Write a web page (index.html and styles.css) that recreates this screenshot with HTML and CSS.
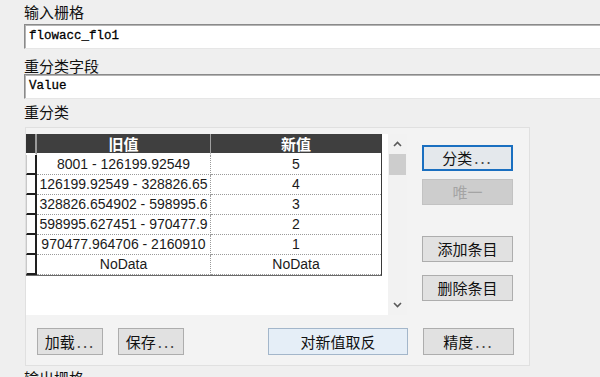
FILE: index.html
```html
<!doctype html>
<html lang="zh-CN">
<head>
  <meta charset="UTF-8">
  <title>重分类</title>
  <link rel="stylesheet" href="styles.css">
</head>
<body>

<div class="label label-first">输入栅格</div>
<div class="field">flowacc_flo1</div>

<div class="label label-mid">重分类字段</div>
<div class="field">Value</div>

<div class="label label-group">重分类</div>

<div class="panel">
  <div class="top-row">
    <div class="listview">
      <div class="grid">
        <div class="hc hc-corner"></div>
        <div class="hc">旧值</div>
        <div class="hc hc-last">新值</div>

        <div class="rh"></div>
        <div class="c">8001 - 126199.92549</div>
        <div class="c c-last">5</div>

        <div class="rh"></div>
        <div class="c">126199.92549 - 328826.65</div>
        <div class="c c-last">4</div>

        <div class="rh"></div>
        <div class="c">328826.654902 - 598995.6</div>
        <div class="c c-last">3</div>

        <div class="rh"></div>
        <div class="c">598995.627451 - 970477.9</div>
        <div class="c c-last">2</div>

        <div class="rh"></div>
        <div class="c">970477.964706 - 2160910</div>
        <div class="c c-last">1</div>

        <div class="rh"></div>
        <div class="c">NoData</div>
        <div class="c c-last">NoData</div>
      </div>
      <div class="scrollbar">
        <div class="arrow">
          <svg width="9" height="6" viewBox="0 0 9 6"><polyline points="1,5 4.5,1.5 8,5" fill="none" stroke="#5a5a5a" stroke-width="1.6"/></svg>
        </div>
        <div class="thumb"></div>
        <div class="track"></div>
        <div class="arrow">
          <svg width="9" height="6" viewBox="0 0 9 6"><polyline points="1,1 4.5,4.5 8,1" fill="none" stroke="#5a5a5a" stroke-width="1.6"/></svg>
        </div>
      </div>
    </div>

    <div class="side">
      <button class="btn btn-focus">分类<span class="dots">...</span></button>
      <button class="btn btn-disabled">唯一</button>
      <button class="btn btn-add">添加条目</button>
      <button class="btn btn-del">删除条目</button>
    </div>
  </div>

  <div class="bottom-row">
    <button class="btn btn-small btn-load">加载<span class="dots">...</span></button>
    <button class="btn btn-small">保存<span class="dots">...</span></button>
    <button class="btn btn-wide">对新值取反</button>
    <button class="btn btn-side">精度<span class="dots">...</span></button>
  </div>
</div>

<div class="label label-last">输出栅格</div>

</body>
</html>
```

FILE: styles.css
```css
html, body {
  margin: 0;
  height: 100%;
  overflow: hidden;
}

body {
  background-color: #efefef;
  font-family: "Noto Sans CJK SC", "Liberation Sans", sans-serif;
  font-size: 15px;
  color: #111;
  padding-left: 24px;
}

.label {
  height: 16px;
  line-height: 16px;
}

.label-first {
  padding-top: 4px;
  padding-bottom: 4px;
}

.label-mid {
  padding-top: 9px;
}

.label-group {
  padding-top: 5px;
  padding-bottom: 7px;
}

.label-last {
  padding-top: 4px;
}

.field {
  box-sizing: border-box;
  width: 600px;
  height: 25px;
  background-color: #fff;
  border-top: 1px solid #8a8a8a;
  border-left: 1px solid #8a8a8a;
  border-bottom: 1px solid #e6e6e6;
  box-shadow: inset 1px 1px 0 #b4b4b4;
  padding-left: 4px;
  font-family: "Liberation Mono", monospace;
  font-size: 12.5px;
  line-height: 23px;
  color: #000;
  -webkit-text-stroke: 0.3px #000;
}

.panel {
  box-sizing: border-box;
  width: 505px;
  height: 239px;
  margin-left: 1px;
  background-color: #f3f3f3;
  border: 1px solid #e0e0e0;
  padding: 6px 15px 0 0;
}

.top-row {
  display: flex;
}

.listview {
  display: flex;
  width: 381px;
  height: 181px;
  background-color: #fff;
}

.grid {
  display: grid;
  grid-template-columns: 11px 174px 170px;
  align-self: flex-start;
  border-right: 1px solid #3a3a3a;
  border-bottom: 1px solid #6a6a6a;
  font-family: "Liberation Sans", sans-serif;
  font-size: 14px;
  color: #1a1a1a;
}

.hc {
  box-sizing: border-box;
  height: 21px;
  line-height: 19px;
  background-color: #3f3f3f;
  border-bottom: 2px solid #fff;
  border-right: 1px solid #a0a0a0;
  color: #fff;
  font-family: "Noto Sans CJK SC", sans-serif;
  font-weight: bold;
  font-size: 15px;
  text-align: center;
}

.hc-corner {
  background-color: #333;
  border-right: 2px solid #9a9a9a;
}

.hc-last {
  border-right: none;
}

.rh {
  box-sizing: border-box;
  height: 20px;
  background-color: #fbfbfb;
  border-left: 1px solid #c8c8c8;
  border-right: 2px solid #1e1e1e;
  border-bottom: 2px solid #1e1e1e;
}

.c {
  box-sizing: border-box;
  height: 20px;
  line-height: 19px;
  text-align: center;
  white-space: nowrap;
  overflow: hidden;
  border-bottom: 1px dotted #9a9a9a;
  border-right: 1px dotted #9a9a9a;
}

.c-last {
  border-right: none;
}

.scrollbar {
  display: flex;
  flex-direction: column;
  width: 19px;
  margin-left: auto;
  background-color: #f2f2f2;
}

.arrow {
  height: 20px;
  display: flex;
  align-items: center;
  justify-content: center;
}

.thumb {
  height: 21px;
  margin: 0 1px 0 1px;
  background-color: #cdcdcd;
}

.track {
  flex: 1;
}

.side {
  display: flex;
  flex-direction: column;
  margin-left: 15px;
}

.btn {
  box-sizing: border-box;
  width: 91px;
  height: 26px;
  padding: 0;
  background-color: #e1e1e1;
  border: 1px solid #adadad;
  font-family: "Noto Sans CJK SC", sans-serif;
  font-size: 15px;
  line-height: 22px;
  color: #111;
}

.dots {
  letter-spacing: 2px;
  margin-left: 2px;
  color: #444;
}

.btn-focus {
  margin-top: 11px;
  border: 2px solid #1a6fc0;
  background-color: #e4e8ec;
}

.btn-disabled {
  margin-top: 8px;
  background-color: #cdcdcd;
  border-color: #c2c2c2;
  color: #a4a4a4;
}

.btn-add {
  margin-top: 31px;
}

.btn-del {
  margin-top: 13px;
}

.bottom-row {
  display: flex;
  margin-top: 13px;
}

.bottom-row .btn {
  height: 27px;
}

.btn-small {
  width: 66px;
  margin-left: 15px;
}

.btn-load {
  margin-left: 11px;
}

.btn-wide {
  width: 140px;
  margin-left: auto;
  background-color: #e5eef7;
  border-color: #a3b6ca;
}

.btn-side {
  margin-left: 15px;
}
```
